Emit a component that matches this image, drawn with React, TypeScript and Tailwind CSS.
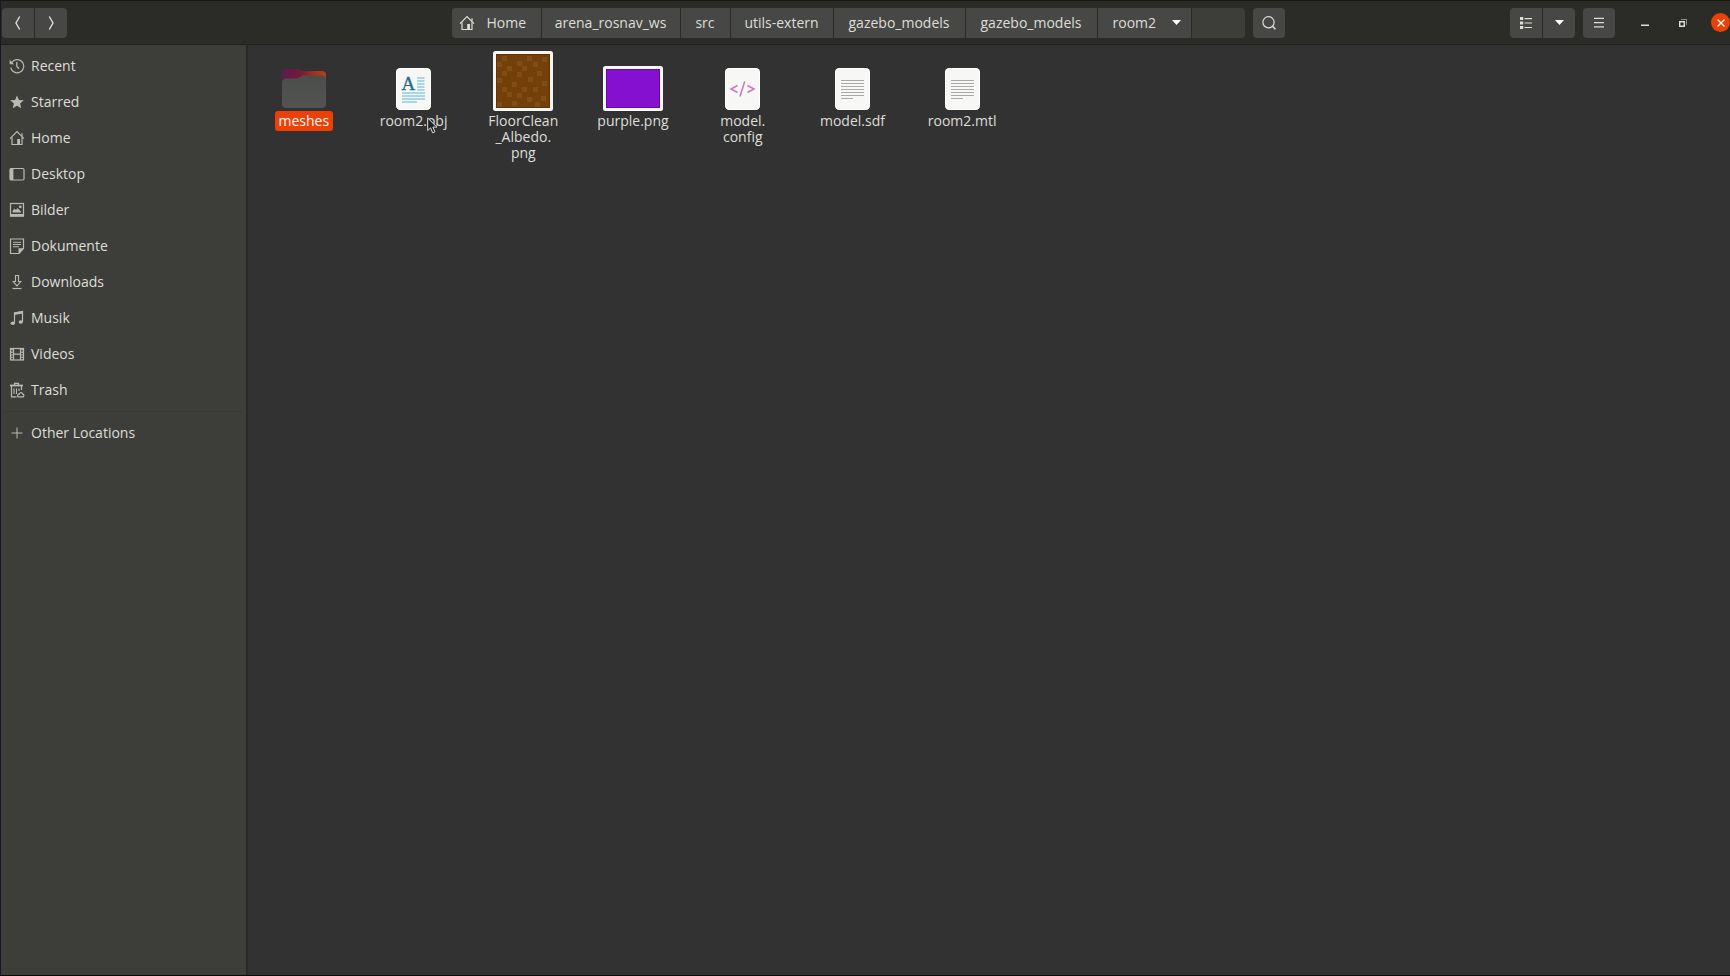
import React from "react";

type IconProps = { children: React.ReactNode };

function Symbol({ children }: IconProps) {
  return (
    <svg
      className="h-4 w-4 shrink-0"
      viewBox="0 0 16 16"
      fill="none"
      stroke="currentColor"
      strokeWidth="1"
      aria-hidden="true"
    >
      {children}
    </svg>
  );
}

function HomeIcon() {
  return (
    <Symbol>
      <path d="M1 8.6 8 1.6l7 7" strokeWidth="1.2" />
      <path d="M3 7.2v7.3h10V7.2M13 6.2V3.2" strokeWidth="1.2" />
      <path d="M8.2 9h2.8v5.5H8.2z" fill="currentColor" stroke="none" />
    </Symbol>
  );
}

const places: { name: string; icon: React.ReactNode }[] = [
  {
    name: "Recent",
    icon: (
      <Symbol>
        <path d="M2.6 4.6A6.6 6.6 0 1 1 1.7 9.6" strokeWidth="1.2" />
        <path d="M.6 1.8v4.4H5z" fill="currentColor" stroke="none" />
        <path d="M7.8 4v4.3l2.2 2.4" strokeWidth="1.3" />
      </Symbol>
    ),
  },
  {
    name: "Starred",
    icon: (
      <Symbol>
        <path
          d="m8 1.4 1.9 4.5 4.9.4-3.7 3.2 1.2 4.8L8 11.7l-4.3 2.6 1.2-4.8L1.2 6.3l4.9-.4z"
          fill="currentColor"
          stroke="none"
        />
      </Symbol>
    ),
  },
  { name: "Home", icon: <HomeIcon /> },
  {
    name: "Desktop",
    icon: (
      <Symbol>
        <rect x="1" y="2.5" width="14" height="11.5" rx="1.2" strokeWidth="1.2" />
        <path d="M1 2.5h3.4V14H1z" fill="currentColor" stroke="none" />
      </Symbol>
    ),
  },
  {
    name: "Bilder",
    icon: (
      <Symbol>
        <rect x="1.5" y="1.5" width="13" height="12.5" strokeWidth="1.2" />
        <path d="M1 12h14v2.6H1z" fill="currentColor" stroke="none" />
        <path d="M3.5 10.5V9l2-2.5L7 8l1.5-2L12 9.5v1z" fill="currentColor" stroke="none" />
        <circle cx="11.3" cy="4.8" r="1.4" fill="currentColor" stroke="none" />
      </Symbol>
    ),
  },
  {
    name: "Dokumente",
    icon: (
      <Symbol>
        <path d="M1.5 1h13v9.5l-4.5 5H1.5z" strokeWidth="1.2" />
        <path d="M4 4.3h8M4 6.5h8M4 8.700h6" />
        <path d="M9.5 15.5v-5.300h5z" fill="currentColor" stroke="none" />
      </Symbol>
    ),
  },
  {
    name: "Downloads",
    icon: (
      <Symbol>
        <path d="M6.5 1.5h3v6h2.300L8 11.8 4.2 7.5h2.300z" strokeWidth="1.1" />
        <path d="M3.5 14.5h9" strokeWidth="1.2" />
      </Symbol>
    ),
  },
  {
    name: "Musik",
    icon: (
      <Symbol>
        <path d="M5.5 12.800V3l8-1.500v10" strokeWidth="1.2" />
        <path d="M5 2.600 14 1v2.400L5 5z" fill="currentColor" stroke="none" />
        <ellipse cx="3.8" cy="13.2" rx="2.2" ry="1.7" fill="currentColor" stroke="none" />
        <ellipse cx="11.8" cy="12" rx="2.2" ry="1.7" fill="currentColor" stroke="none" />
      </Symbol>
    ),
  },
  {
    name: "Videos",
    icon: (
      <Symbol>
        <rect x="1.5" y="2.5" width="13" height="11.5" strokeWidth="1.2" />
        <path d="M4.5 2.500V14M11.5 2.500V14M4.5 8.200h7" strokeWidth="1.2" />
        <path d="M2.900 3v11M13.100 3v11" strokeWidth="1.6" strokeDasharray="1.3 1.3" />
      </Symbol>
    ),
  },
  {
    name: "Trash",
    icon: (
      <Symbol>
        <path d="M5.5 3V1.300h4V3" strokeWidth="1.2" />
        <path d="M1 3.500h13" strokeWidth="1.8" />
        <path d="M2.500 4v10.900h5M12.500 4v4" strokeWidth="1.2" />
        <path d="M5 6.500v5.500M7.500 6.500v5.500M10 6.500v2.500" strokeWidth="1.1" />
        <path d="M9 14.800c-1-1.500.2-3 1.500-3 .2-1.600 2.800-1.600 3 0 1.400.2 1.800 1.900.8 3z" strokeWidth="1.2" />
      </Symbol>
    ),
  },
];

const crumbs = [
  { name: "arena_rosnav_ws", width: "w-[139px]" },
  { name: "src", width: "w-[50px]" },
  { name: "utils-extern", width: "w-[103px]" },
  { name: "gazebo_models", width: "w-[132px]" },
  { name: "gazebo_models", width: "w-[132px]" },
];

function Page({ children }: IconProps) {
  return (
    <svg className="mb-px h-[42px] w-[35px]" viewBox="0 0 35 42" aria-hidden="true">
      <rect x="0" y="0" width="35" height="42" rx="4.5" fill="#f7f7f5" />
      <rect x="0.5" y="0.5" width="34" height="41" rx="4" fill="none" stroke="#ffffff" />
      {children}
    </svg>
  );
}

function TextPage() {
  return (
    <Page>
      <path
        d="M6 12.500h23M6 15.500h23M6 18.500h23M6 21.500h23M6 24.500h23M6 27.500h23M6 30.500h12"
        stroke="#a9a9a7"
        strokeWidth="1"
      />
    </Page>
  );
}

const files: { name: string; lines: string[]; icon: React.ReactNode; selected?: boolean }[] = [
  {
    name: "meshes",
    lines: ["meshes"],
    selected: true,
    icon: (
      <svg className="mb-[3px] h-10 w-11" viewBox="0 0 44 40" aria-hidden="true">
        <defs>
          <linearGradient id="folder-back" x1="0" x2="1" y1="0" y2="0">
            <stop offset="0" stopColor="#5f1a50" />
            <stop offset="0.42" stopColor="#741a36" />
            <stop offset="0.6" stopColor="#8f2a24" />
            <stop offset="1" stopColor="#b8401c" />
          </linearGradient>
          <linearGradient id="folder-front" x1="0" x2="0" y1="0" y2="1">
            <stop offset="0" stopColor="#4c4e4b" />
            <stop offset="1" stopColor="#535452" />
          </linearGradient>
        </defs>
        <path d="M0 14V5a4 4 0 0 1 4-4h12c2 0 3 2 5 2h19a4 4 0 0 1 4 4v7z" fill="url(#folder-back)" />
        <path
          d="M0 14a4 4 0 0 1 3-3.500h12c2 0 4-3 6-3h19a4 4 0 0 1 4 4V36a4 4 0 0 1-4 4H4a4 4 0 0 1-4-4z"
          fill="url(#folder-front)"
        />
      </svg>
    ),
  },
  {
    name: "room2.obj",
    lines: ["room2.obj"],
    icon: (
      <Page>
        <text x="5.5" y="22" fontSize="19" fontFamily="Liberation Serif, serif" fill="#26688f" stroke="#26688f" strokeWidth="0.3">
          A
        </text>
        <path
          d="M21 10h7.500M21 13h7.500M21 16h7.500M21 19h7.500M21 22h7.500M6 25h23M6 28h23M6 31h23M6 34h15"
          stroke="#8fcbe3"
          strokeWidth="1.3"
        />
      </Page>
    ),
  },
  {
    name: "FloorClean_Albedo.png",
    lines: ["FloorClean", "_Albedo.", "png"],
    icon: (
      <svg className="h-[60px] w-[60px]" viewBox="0 0 60 60" aria-hidden="true">
        <rect width="60" height="60" rx="2.5" fill="#f8f6f2" />
        <rect x="3" y="3" width="54" height="54" fill="#744009" />
        <path
          d="M9 5h5v5H9zM34 5h5v5h-5zM49 6h5v5h-5zM4 11h5v5H4zM24 10h5v5h-5zM40 11h5v5h-5zM14 15h5v5h-5zM29 15h5v5h-5zM9 20h5v5H9zM44 20h5v5h-5zM24 21h5v5h-5zM35 26h5v5h-5zM4 27h5v5H4zM19 31h5v5h-5zM49 30h5v5h-5zM29 36h5v5h-5zM9 36h5v5H9zM40 36h5v5h-5zM14 41h5v5h-5zM24 42h5v5h-5zM34 46h5v5h-5zM48 45h5v5h-5zM4 51h5v5H4zM19 50h5v5h-5zM42 51h5v5h-5z"
          fill="#814c15"
        />
        <rect x="3.5" y="3.5" width="53" height="53" fill="none" stroke="#603407" />
      </svg>
    ),
  },
  {
    name: "purple.png",
    lines: ["purple.png"],
    icon: (
      <svg className="h-[45px] w-[60px]" viewBox="0 0 60 45" aria-hidden="true">
        <rect width="60" height="45" rx="2.5" fill="#f8f6fa" />
        <rect x="3" y="3" width="54" height="39" fill="#8610d0" />
        <rect x="3.5" y="3.5" width="53" height="38" fill="none" stroke="#640c9c" />
      </svg>
    ),
  },
  {
    name: "model.config",
    lines: ["model.", "config"],
    icon: (
      <Page>
        <path
          d="m12.500 17.500-6.500 3.500 6.500 3.500M22.500 17.500l6.500 3.500-6.500 3.500M19.700 13.500 15 28.500"
          fill="none"
          stroke="#cb74c4"
          strokeWidth="1.5"
        />
      </Page>
    ),
  },
  { name: "model.sdf", lines: ["model.sdf"], icon: <TextPage /> },
  { name: "room2.mtl", lines: ["room2.mtl"], icon: <TextPage /> },
];

export default function App() {
  return (
    <div className="flex min-h-screen flex-col border-b border-l border-b-[#0c0c0c] border-l-[#1f1426] bg-[#323232] font-['Open_Sans','Noto_Sans',sans-serif] text-sm text-[#deded9]">
      <header className="grid h-[45px] shrink-0 grid-cols-[1fr_auto_1fr] items-center border-t border-b border-t-[#171714] border-b-[#20201c] bg-[#2b2b27] pl-px">
        <nav className="flex h-[30px] w-[65px] gap-px overflow-hidden rounded bg-[#2b2b28]" aria-label="History">
          <button type="button" aria-label="Back" className="flex flex-1 items-center justify-center bg-[#474745]">
            <Symbol>
              <path d="M9.700 1.500 6 8l3.700 6.500" strokeWidth="1.4" />
            </Symbol>
          </button>
          <button type="button" aria-label="Forward" className="flex flex-1 items-center justify-center bg-[#474745]">
            <Symbol>
              <path d="M6.300 1.500 10 8l-3.700 6.500" strokeWidth="1.4" />
            </Symbol>
          </button>
        </nav>

        <div className="ml-1 flex h-[30px] gap-2">
          <nav className="flex divide-x divide-[#2b2b28] overflow-hidden rounded bg-[#3d3d39]" aria-label="Path">
            <button type="button" className="flex w-[90px] items-center gap-3 bg-[#474745] pl-[7px]">
              <HomeIcon />
              Home
            </button>
            {crumbs.map((crumb, index) => (
              <button key={index} type="button" className={`bg-[#474745] text-center ${crumb.width}`}>
                {crumb.name}
              </button>
            ))}
            <button type="button" className="flex w-[94px] items-center gap-4 bg-[#474745] pl-[15px]">
              room2
              <svg className="h-[5px] w-[9px] text-white" viewBox="0 0 9 5" fill="currentColor" aria-hidden="true">
                <path d="M0 0h9L4.500 5z" />
              </svg>
            </button>
            <span className="w-[53px]" />
          </nav>
          <button type="button" aria-label="Search" className="flex w-8 items-center justify-center rounded bg-[#474745]">
            <Symbol>
              <circle cx="7.5" cy="7.3" r="5.6" strokeWidth="1.2" />
              <path d="m11.500 11.300 3 3" strokeWidth="1.6" />
            </Symbol>
          </button>
        </div>

        <div className="flex items-center justify-end">
          <div className="flex h-[30px] w-[65px] gap-px overflow-hidden rounded bg-[#2b2b28]">
            <button type="button" aria-label="List view" className="flex flex-1 items-center justify-center bg-[#474745]">
              <svg className="h-3 w-3" viewBox="0 0 12 12" fill="currentColor" aria-hidden="true">
                <path d="M0 0h3.200v3H0zM0 4.500h3.200v3H0zM0 9h3.200v3H0zM4.500 1H12v1.200H4.500zM4.500 5.400H12v1.200H4.500zM4.500 9.900H12v1.200H4.500z" />
              </svg>
            </button>
            <button type="button" aria-label="View options" className="flex flex-1 items-center justify-center bg-[#474745] text-white">
              <svg className="h-[5px] w-[9px]" viewBox="0 0 9 5" fill="currentColor" aria-hidden="true">
                <path d="M0 0h9L4.500 5z" />
              </svg>
            </button>
          </div>
          <button type="button" aria-label="Menu" className="ml-2 flex h-[30px] w-8 items-center justify-center rounded bg-[#474745]">
            <svg className="h-[11px] w-[10px]" viewBox="0 0 10 11" fill="currentColor" aria-hidden="true">
              <path d="M0 .800h10V2H0zM0 5h10v1.200H0zM0 9.200h10v1.200H0z" />
            </svg>
          </button>
          <button type="button" aria-label="Minimize" className="ml-5 flex h-5 w-5 items-center justify-center">
            <svg className="h-2 w-2" viewBox="0 0 8 8" fill="currentColor" aria-hidden="true">
              <path d="M0 5.500h8V7H0z" />
            </svg>
          </button>
          <button type="button" aria-label="Restore" className="ml-[18px] flex h-5 w-5 items-center justify-center">
            <svg className="h-2 w-2" viewBox="0 0 8 8" fill="none" stroke="currentColor" aria-hidden="true">
              <path d="M.700 2.700h4.600v4.600H.700z" strokeWidth="1.4" />
              <path d="M2 .500h5.500V6" strokeWidth="0.8" opacity="0.7" />
            </svg>
          </button>
          <button type="button" aria-label="Close" className="ml-[18px] flex h-[19px] w-[19px] items-center justify-center rounded-full bg-[#ec4006] text-white">
            <svg className="h-2 w-2" viewBox="0 0 8 8" stroke="currentColor" strokeWidth="1.4" aria-hidden="true">
              <path d="m.500.500 7 7m0-7-7 7" />
            </svg>
          </button>
        </div>
      </header>

      <div className="flex flex-1">
        <aside className="w-[247px] shrink-0 border-r-2 border-r-[#292927] bg-[#3d3d39] pt-[3px]">
          <ul>
            {places.map((place) => (
              <li key={place.name}>
                <a href="#" className="flex h-9 items-center gap-[6px] pl-2">
                  <span className="text-[#b9b9b5]">{place.icon}</span>
                  {place.name}
                </a>
              </li>
            ))}
          </ul>
          <hr className="mx-1 my-[3px] border-[#373733]" />
          <a href="#" className="flex h-9 items-center gap-[6px] pl-2">
            <span className="text-[#b9b9b5]">
              <Symbol>
                <path d="M8 2.500v11M2.500 8h11" />
              </Symbol>
            </span>
            Other Locations
          </a>
        </aside>

        <main className="flex-1 pt-[6px] pl-px">
          <ul className="grid w-[768px] grid-cols-7">
            {files.map((file) => (
              <li key={file.name} className="relative flex flex-col items-center">
                <div className="flex h-[60px] items-end">{file.icon}</div>
                <span
                  className={
                    file.selected
                      ? "rounded-[3px] bg-[#ec4006] px-1 py-0.5 text-center leading-4 text-white"
                      : "px-1 py-0.5 text-center leading-4"
                  }
                >
                  {file.lines.map((line) => (
                    <span key={line} className="block">
                      {line}
                    </span>
                  ))}
                </span>
                {file.name === "room2.obj" && (
                  <svg className="absolute top-[66px] left-[68px] h-[17px] w-[11px]" viewBox="0 0 11 17" aria-hidden="true">
                    <path
                      d="M.700 1v12.500l2.900-2.700 2 5 2.300-1-2-4.700h4z"
                      fill="#222222"
                      stroke="#dddddd"
                      strokeWidth="1"
                    />
                  </svg>
                )}
              </li>
            ))}
          </ul>
        </main>
      </div>
    </div>
  );
}
